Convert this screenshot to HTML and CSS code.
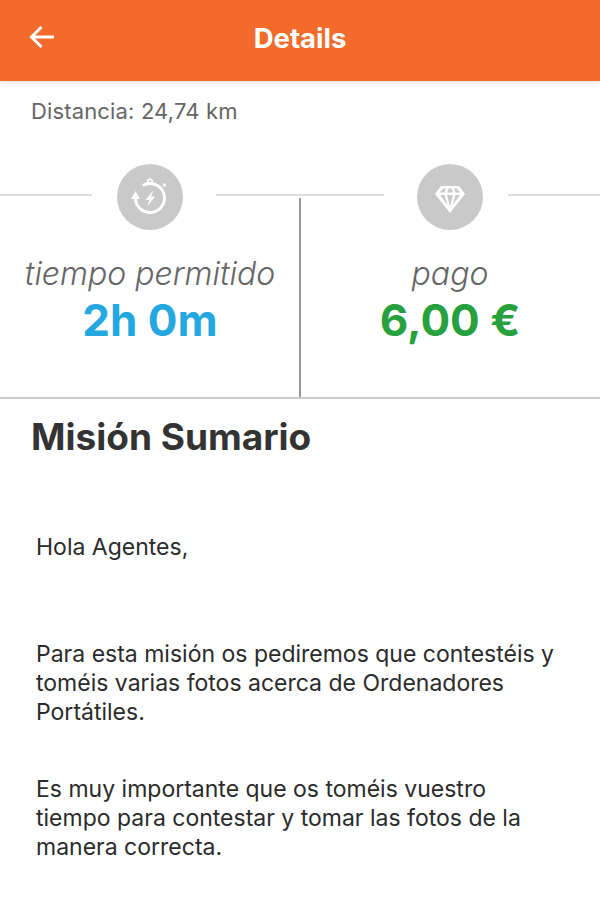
FILE: index.html
```html
<!DOCTYPE html>
<html lang="en">
<head>
<meta charset="UTF-8">
<title>Details</title>
<link rel="stylesheet" href="styles.css">
</head>

<body>
    <header class="top-bar">
        <svg class="back-icon" viewBox="0 0 26 24">
            <path d="M25 12H3M12.500 2L2.500 12L12.500 22" fill="none" stroke="#fff" stroke-width="3"/>
        </svg>
        <h1 class="top-title">Details</h1>
    </header>

    <p class="distance">Distancia: 24,74 km</p>

    <section class="stats">
        <div class="stat stat-left">
            <div class="stat-head">
                <span class="stat-line"></span>
                <span class="stat-icon">
                    <svg viewBox="0 0 40 40">
                        <circle cx="20" cy="4.500" r="2.300" fill="none" stroke="#fff" stroke-width="1.500"/>
                        <circle cx="34.500" cy="8" r="1.800" fill="#fff"/>
                        <path d="M12.750 8.440A14.500 14.500 0 1 1 5.500 21" fill="none" stroke="#fff" stroke-width="3"/>
                        <path d="M1 22L5.500 14L10 22Z" fill="#fff"/>
                        <path d="M23.500 13L15.500 23H19.500L17 30L25 19.500H21Z" fill="#fff"/>
                    </svg>
                </span>
                <span class="stat-line"></span>
            </div>
            <div class="stat-label">tiempo permitido</div>
            <div class="stat-value time">2h 0m</div>
        </div>
        <div class="stat stat-right">
            <div class="stat-head">
                <span class="stat-line"></span>
                <span class="stat-icon">
                    <svg viewBox="0 0 40 40">
                        <path d="M11 9H29L35 17L20 36L5 17Z M13.500 11.500H16L14.500 15.500H9.500Z M18.500 11.500H21.500L23 15.500H17Z M24 11.500H26.500L30.500 15.500H25.500Z M10 18H14.500L17.500 28Z M17 18H23L20 29.500Z M25.500 18H30L22.500 28Z" fill="#fff" fill-rule="evenodd"/>
                    </svg>
                </span>
                <span class="stat-line"></span>
            </div>
            <div class="stat-label">pago</div>
            <div class="stat-value pay">6,00 €</div>
        </div>
    </section>

    <main class="summary">
        <h2 class="summary-title">Misión Sumario</h2>
        <div class="summary-text">
            <p class="greeting">Hola Agentes,</p>
            <p>Para esta misión os pediremos que contestéis y toméis varias fotos acerca de Ordenadores Portátiles.</p>
            <p>Es muy importante que os toméis vuestro tiempo para contestar y tomar las fotos de la manera correcta.</p>
        </div>
    </main>
</body>

</html>
```

FILE: styles.css
```css
html, body {
    margin: 0;
    padding: 0;
    background-color: white;
}

body {
    height: 917px;
    overflow: hidden;
    font-family: "Inter", "Open Sans", sans-serif;
}

.top-bar {
    height: 81px;
    background-color: #f26b2a;
    box-shadow: 0 1px 4px rgba(0, 0, 0, 0.15);
    display: flex;
    align-items: center;
    justify-content: center;
    position: relative;
}

.back-icon {
    position: absolute; /* sits over the bar, title stays centred */
    left: 29px;
    top: 25px;
    width: 26px;
    height: 24px;
}

.top-title {
    margin: 0 0 5px;
    color: white;
    font-size: 27.500px;
    font-weight: 700;
}

.distance {
    margin: 0;
    padding: 16px 0 0 31px;
    height: 67px;
    box-sizing: border-box;
    color: #666;
    font-size: 22px;
    letter-spacing: 0.15px;
    line-height: 28px;
}

.stats {
    display: flex;
    height: 249px;
    border-bottom: 2px solid #ccc;
    margin-bottom: -1px;
}

.stat {
    width: 300px;
    text-align: center;
}

.stat-right {
    position: relative;
}

/* divider only starts below the icon row */
.stat-right::before {
    content: "";
    position: absolute;
    left: -1px;
    top: 50px;
    bottom: 0;
    width: 2px;
    background-color: #999;
}

.stat-head {
    display: flex;
    align-items: center;
    padding-top: 16px;
}

.stat-line {
    flex: 1;
    height: 2px;
    margin-top: -4px;
    background-color: #ddd;
}

.stat-left .stat-line:first-child {
    flex: none;
    width: 92px;
    margin-right: 25px;
}

.stat-left .stat-line:last-child {
    margin-left: 33px;
}

.stat-right .stat-line:first-child {
    margin-right: 33px;
}

.stat-right .stat-line:last-child {
    flex: none;
    width: 92px;
    margin-left: 25px;
}

.stat-icon {
    width: 66px;
    height: 66px;
    border-radius: 50%;
    background-color: #c9c9c9;
    display: flex;
    align-items: center;
    justify-content: center;
}

.stat-icon svg {
    width: 40px;
    height: 40px;
}

.stat-label {
    margin-top: 25px;
    color: #666;
    font-size: 32px;
    font-style: italic;
    font-weight: 300;
    line-height: 38px;
}

.stat-value {
    font-size: 44px;
    font-weight: 700;
    line-height: 54px;
}

.time {
    color: #25a7df;
}

.pay {
    color: #27a13d;
}

.summary-title {
    margin: 0;
    padding: 16px 0 0 31px;
    color: #333;
    font-size: 37px;
    font-weight: 700;
    line-height: 46px;
}

.summary-text {
    padding: 0 36px;
    color: #2b2b2b;
    font-size: 23px;
    line-height: 29px;
}

.summary-text p {
    margin: 48px 0 0;
}

.summary-text .greeting {
    margin: 73px 0 78px;
}
```
